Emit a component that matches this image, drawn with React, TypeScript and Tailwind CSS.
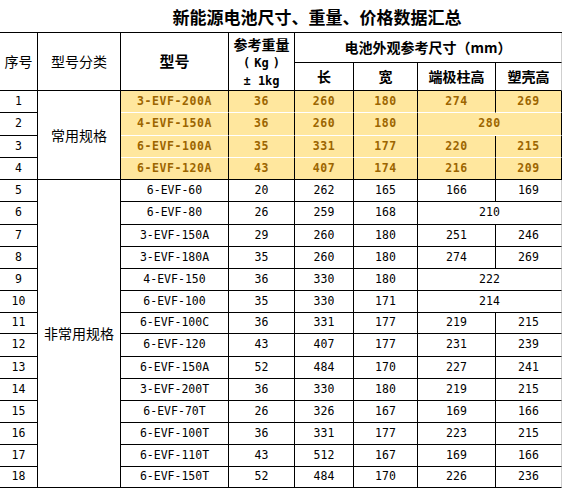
import React from "react";

type Row = [string, string, string, string, string, string, string | null];

const rows: Row[] = [
  ["1", "3-EVF-200A", "36", "260", "180", "274", "269"],
  ["2", "4-EVF-150A", "36", "260", "180", "280", null],
  ["3", "6-EVF-100A", "35", "331", "177", "220", "215"],
  ["4", "6-EVF-120A", "43", "407", "174", "216", "209"],
  ["5", "6-EVF-60", "20", "262", "165", "166", "169"],
  ["6", "6-EVF-80", "26", "259", "168", "210", null],
  ["7", "3-EVF-150A", "29", "260", "180", "251", "246"],
  ["8", "3-EVF-180A", "35", "260", "180", "274", "269"],
  ["9", "4-EVF-150", "36", "330", "180", "222", null],
  ["10", "6-EVF-100", "35", "330", "171", "214", null],
  ["11", "6-EVF-100C", "36", "331", "177", "219", "215"],
  ["12", "6-EVF-120", "43", "407", "177", "231", "239"],
  ["13", "6-EVF-150A", "52", "484", "170", "227", "241"],
  ["14", "3-EVF-200T", "36", "330", "180", "219", "215"],
  ["15", "6-EVF-70T", "26", "326", "167", "169", "166"],
  ["16", "6-EVF-100T", "36", "331", "177", "223", "215"],
  ["17", "6-EVF-110T", "43", "512", "167", "169", "166"],
  ["18", "6-EVF-150T", "52", "484", "170", "226", "236"],
];

const CJK = "font-['Noto_Sans_CJK_SC',sans-serif]";
const MONO = "font-['DejaVu_Sans_Mono','Noto_Sans_CJK_SC',monospace]";

const base = "flex items-center justify-center border-r border-b";

function App() {
  const cells: React.ReactNode[] = [];

  rows.forEach((r, i) => {
    const yellow = i < 4;
    const bottom = i < 3 ? "border-b-white" : "border-b-black";
    const yCls = yellow
      ? `bg-[#ffe79e] text-[#9c6500] font-bold tracking-[0.6px] ${bottom} border-r-black`
      : "text-black border-black";
    cells.push(
      <div key={`s${i}`} className={`${base} border-black ${MONO} text-[11.5px] text-black`}>
        {r[0]}
      </div>
    );
    if (i === 0) {
      cells.push(
        <div key="common" className={`${base} row-span-4 border-black ${CJK} text-[14px] text-black`}>
          常用规格
        </div>
      );
    }
    if (i === 4) {
      cells.push(
        <div key="uncommon" className={`${base} row-span-14 border-black ${CJK} text-[14px] text-black`}>
          非常用规格
        </div>
      );
    }
    [r[1], r[2], r[3], r[4]].forEach((v, j) => {
      cells.push(
        <div key={`c${i}-${j}`} className={`${base} ${yCls} ${MONO} text-[11.5px]`}>
          {v}
        </div>
      );
    });
    if (r[6] === null) {
      cells.push(
        <div
          key={`m${i}`}
          className={`${base} col-span-2 ${yCls} border-r-[#cfcfcf] ${MONO} text-[11.5px]`}
        >
          {r[5]}
        </div>
      );
    } else {
      cells.push(
        <div key={`t${i}`} className={`${base} ${yCls} ${MONO} text-[11.5px]`}>
          {r[5]}
        </div>
      );
      cells.push(
        <div key={`u${i}`} className={`${base} ${yCls} border-r-[#cfcfcf] ${MONO} text-[11.5px]`}>
          {r[6]}
        </div>
      );
    }
  });

  return (
    <div className="w-[568px] h-[490px] bg-white overflow-hidden">
      <div className="w-[562px] h-[32px] flex items-center justify-center pl-[72px]">
        <span className={`${CJK} text-[17px] font-bold text-black leading-none`}>
          新能源电池尺寸、重量、价格数据汇总
        </span>
      </div>
      <div className="w-[562px] grid grid-cols-[38px_83px_108px_66px_59px_64px_78px_66px] grid-rows-[30px_28px_22px_23px_22px_22px_22px_23px_22px_22px_22px_22px_21px_23px_22px_22px_22px_22px_22px_21px] border-t border-black">
        <div className={`${base} row-span-2 border-black ${CJK} text-[14px] text-black`}>序号</div>
        <div className={`${base} row-span-2 border-black ${CJK} text-[14px] text-black`}>型号分类</div>
        <div className={`${base} row-span-2 border-black ${CJK} text-[15px] font-bold text-black`}>型号</div>
        <div className="row-span-2 flex flex-col items-center justify-center border-r border-b border-black font-bold text-black">
          <div className={`h-[20px] leading-[20px] ${CJK} text-[14px]`}>参考重量</div>
          <div className={`h-[18px] leading-[18px] flex gap-[4px] ${MONO} text-[12px]`}>
            <span>(</span>
            <span>Kg</span>
            <span>)</span>
          </div>
          <div className={`h-[18px] leading-[18px] ${MONO} text-[12px]`}>± 1kg</div>
        </div>
        <div
          className={`${base} col-span-4 border-b-black border-r-[#cfcfcf] ${CJK} text-[14px] font-bold text-black`}
        >
          电池外观参考尺寸（mm）
        </div>
        <div className={`${base} border-black ${CJK} text-[14px] font-bold text-black`}>长</div>
        <div className={`${base} border-black ${CJK} text-[14px] font-bold text-black`}>宽</div>
        <div className={`${base} border-black ${CJK} text-[14px] font-bold text-black`}>端极柱高</div>
        <div className={`${base} border-b-black border-r-[#cfcfcf] ${CJK} text-[14px] font-bold text-black`}>
          塑壳高
        </div>
        {cells}
      </div>
    </div>
  );
}

export default App;
